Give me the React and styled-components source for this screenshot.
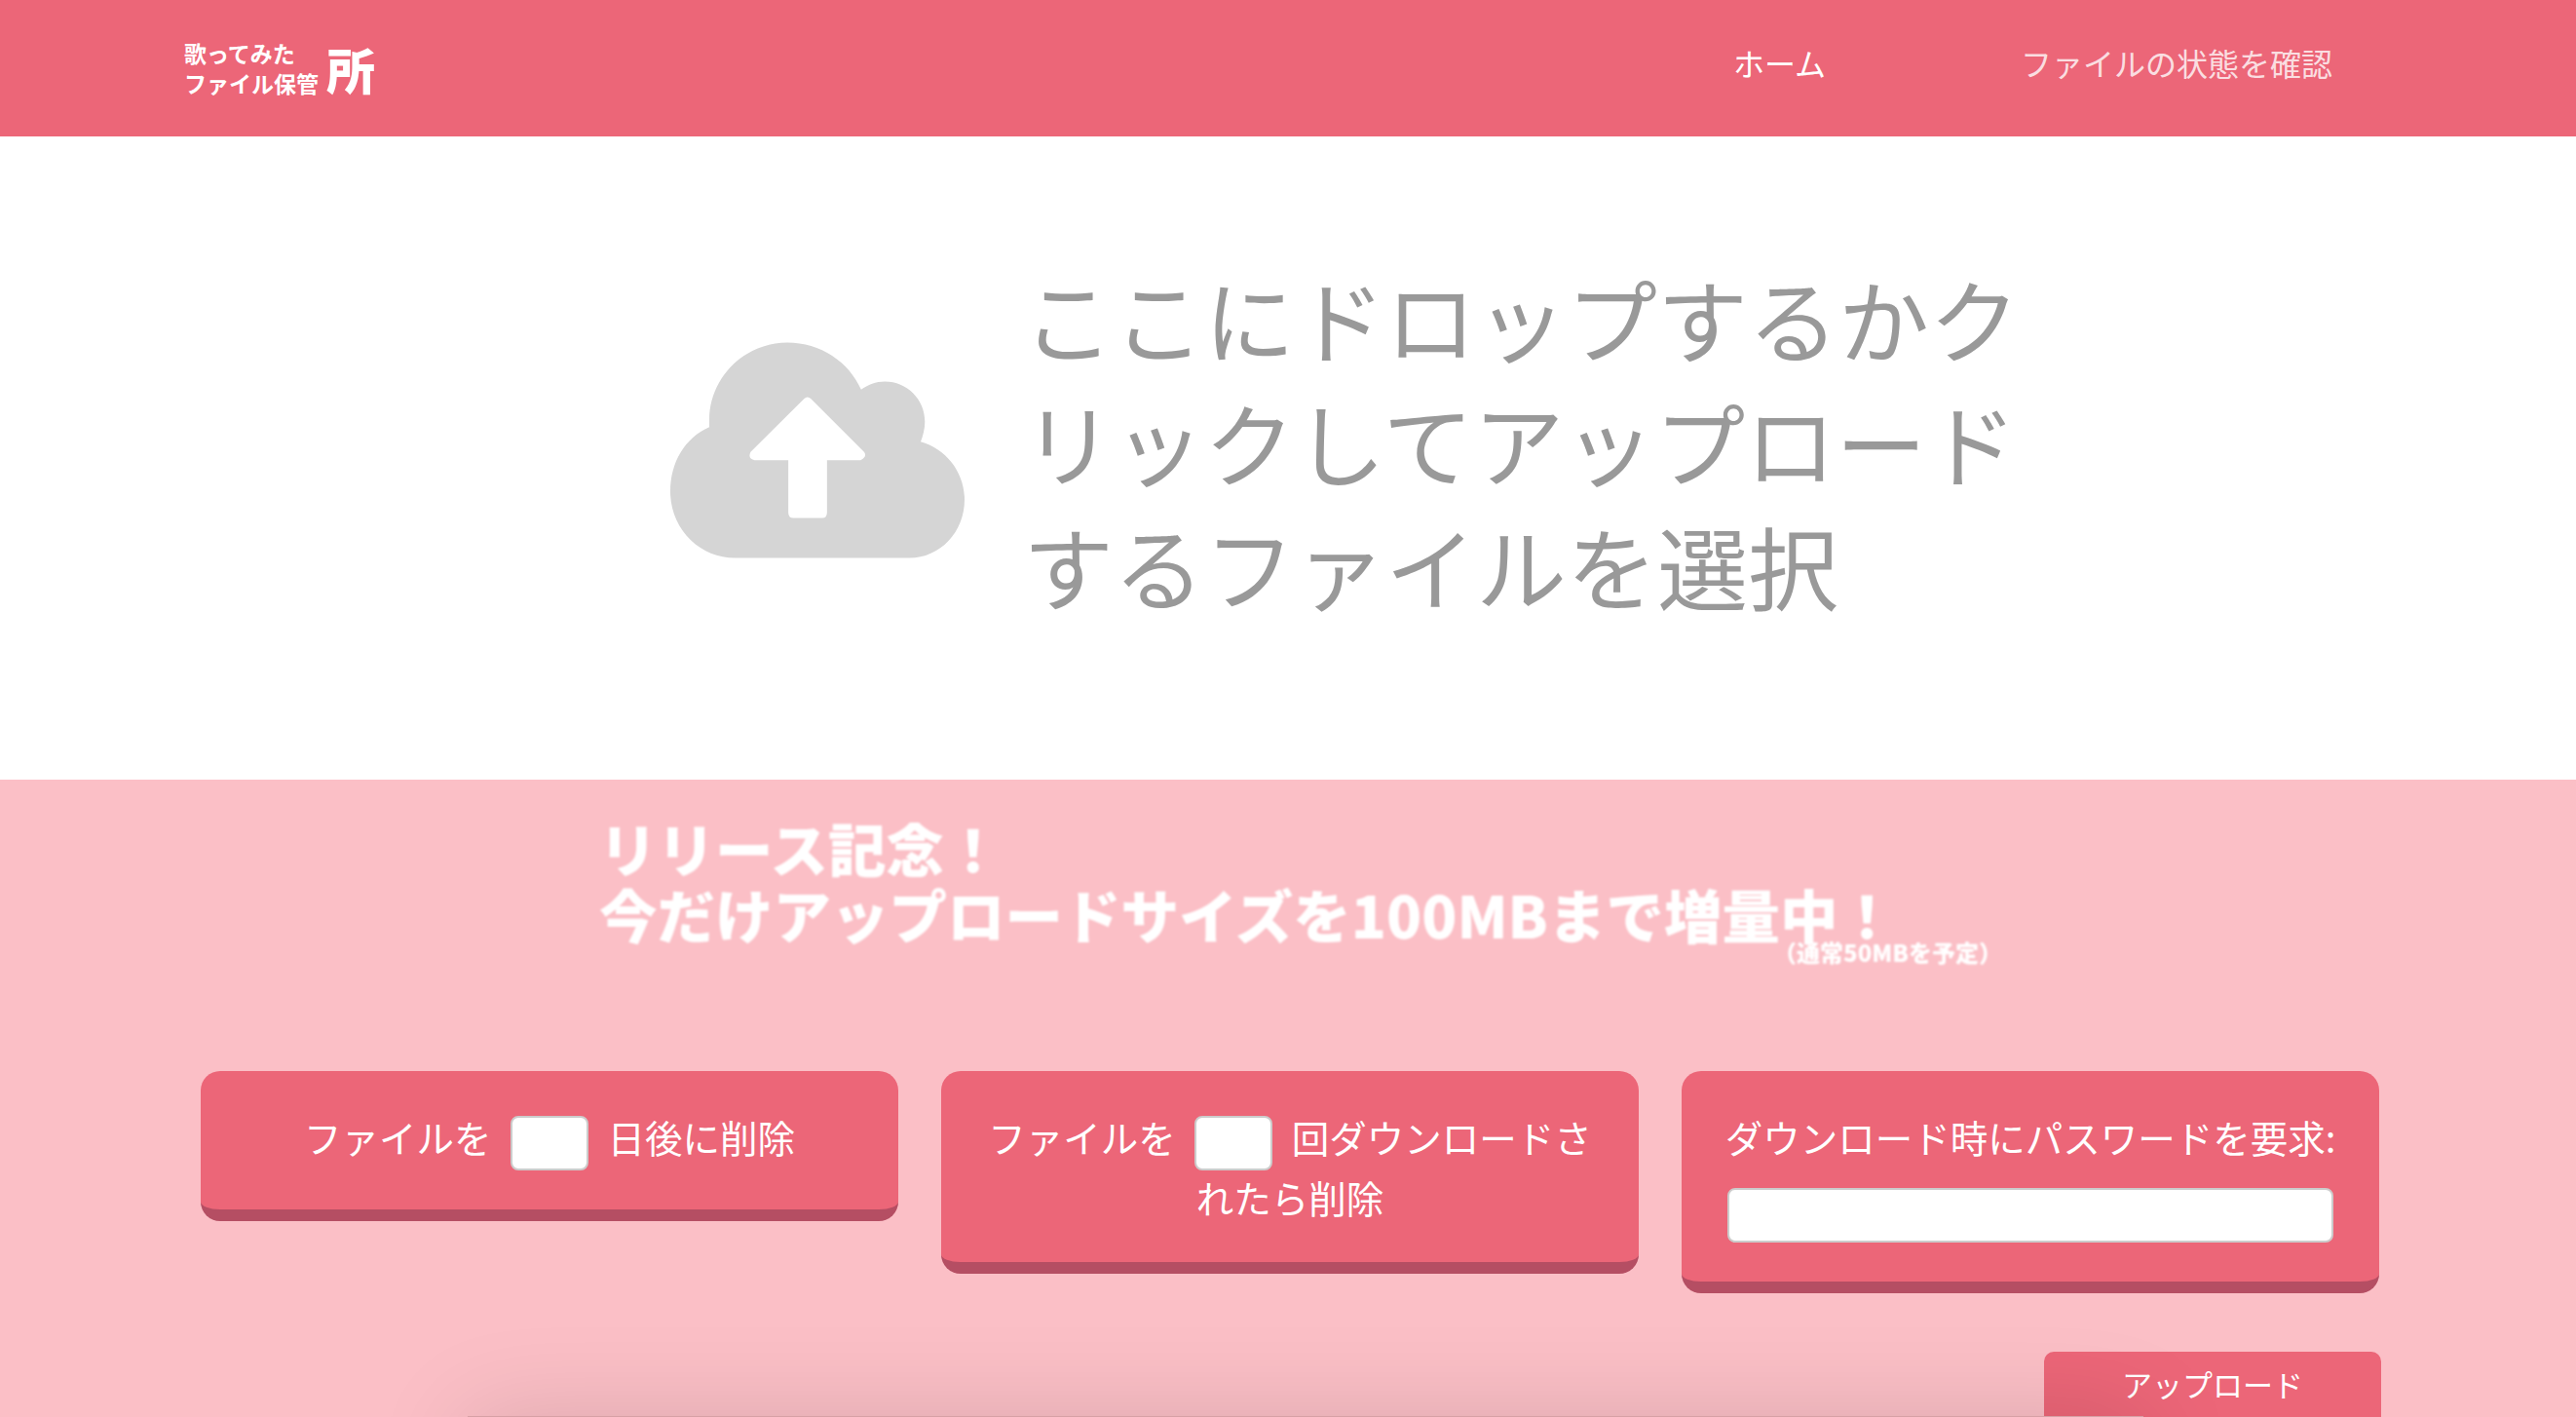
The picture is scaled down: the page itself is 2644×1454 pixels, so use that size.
import React from 'react'
import styled, { createGlobalStyle } from 'styled-components'

const GlobalStyle = createGlobalStyle`
  html, body {
    margin: 0;
    height: 100%;
    overflow: hidden;
    background: rgb(251, 191, 198);
  }
  * {
    box-sizing: border-box;
  }
`

const Page = styled.div`
  position: relative;
  height: 1454px;
  overflow: hidden;
  font-family: 'Noto Sans CJK JP', 'Noto Sans', sans-serif;
  color: white;
`

const Header = styled.header`
  display: flex;
  align-items: center;
  justify-content: space-between;
  height: 140px;
  padding: 0 250px 12px 189px;
  background: rgb(236, 102, 120);
`

const Logo = styled.div`
  display: flex;
  align-items: center;
  gap: 8px;
  margin-top: 12px;
  font-weight: 700;
`

const LogoText = styled.div`
  font-size: 23px;
  line-height: 31px;
`

const LogoMark = styled.div`
  font-size: 50px;
  line-height: 56px;
  font-weight: 900;
`

const Nav = styled.nav`
  display: flex;
  gap: 200px;
  font-size: 32px;
  font-weight: 400;
`

const NavLink = styled.a`
  color: ${props => (props.$muted ? 'rgba(255, 255, 255, 0.8)' : 'white')};
  text-decoration: none;
`

const Hero = styled.section`
  display: flex;
  align-items: center;
  gap: 60px;
  height: 660px;
  padding: 0 0 16px 688px;
  background: white;
`

const HeroText = styled.div`
  width: 1040px;
  margin-bottom: 20px;
  font-size: 93px;
  line-height: 127px;
  font-weight: 400;
  color: #999;
`

const Promo = styled.div`
  width: 1440px;
  margin-left: 615px;
  padding-top: 35px;
  font-size: 59.5px;
  line-height: 68px;
  font-weight: 900;
  filter: blur(0.8px);
`

const PromoNote = styled.div`
  margin-top: -9px;
  font-size: 24px;
  line-height: 30px;
  text-align: right;
`

const Cards = styled.div`
  display: flex;
  align-items: flex-start;
  gap: 44px;
  margin: 107px 0 0 206px;
`

const Card = styled.div`
  width: 716px;
  padding: 40px 38px;
  border-bottom: 12px solid rgb(181, 78, 99);
  border-radius: 20px;
  background: rgb(236, 102, 120);
  font-size: 38.5px;
  line-height: 54px;
  font-weight: 400;
  text-align: center;
`

const SmallInput = styled.input`
  width: 80px;
  height: 56px;
  margin: 0 11px;
  border: 2px solid #ccc;
  border-radius: 8px;
  background: white;
  vertical-align: middle;
`

const WideInput = styled.input`
  display: block;
  width: 622px;
  height: 56px;
  margin: 26px auto 0;
  border: 2px solid #ccc;
  border-radius: 8px;
  background: white;
`

const UploadRow = styled.div`
  display: flex;
  justify-content: flex-end;
  padding-right: 200px;
  margin-top: 60px;
`

const UploadButton = styled.button`
  width: 346px;
  height: 100px;
  padding: 0 0 36px;
  border: 0;
  border-radius: 10px 10px 0 0;
  background: rgb(236, 102, 120);
  color: white;
  font-family: inherit;
  font-size: 31px;
  font-weight: 400;
`

// panel that starts on the last pixel row, only its shadow is really seen
const FoldPanel = styled.div`
  position: absolute;
  left: 480px;
  right: 444px;
  top: 1453px;
  height: 200px;
  background: rgb(215, 160, 165);
  box-shadow: 0 0 100px rgba(0, 0, 0, 0.13);
`

function CloudIcon() {
  return (
    <svg width="302" height="222" viewBox="145 152 905 663">
      <path
        fill="#d5d5d5"
        d="M265 412C190 445 145 520 145 610C145 725 235 815 345 815L880 815C975 815 1050 735 1050 635C1050 550 992 478 915 457C922 440 928 418 928 395C928 327 873 272 805 272C778 272 752 282 732 297C695 212 607 152 505 152C373 152 265 260 265 390Z"
      />
      <path
        fill="white"
        d="M557 325Q567 316 577 325L741 489Q752 502 730 514L627 514L627 675Q627 692 612 692L524 692Q508 692 508 675L508 514L405 514Q382 510 392 489Z"
      />
    </svg>
  )
}

export default function App() {
  return (
    <Page>
      <GlobalStyle />
      <Header>
        <Logo>
          <LogoText>
            歌ってみた
            <br />
            ファイル保管
          </LogoText>
          <LogoMark>所</LogoMark>
        </Logo>
        <Nav>
          <NavLink href="#">ホーム</NavLink>
          <NavLink href="#" $muted>
            ファイルの状態を確認
          </NavLink>
        </Nav>
      </Header>
      <Hero>
        <CloudIcon />
        <HeroText>ここにドロップするかクリックしてアップロードするファイルを選択</HeroText>
      </Hero>
      <Promo>
        リリース記念！
        <br />
        今だけアップロードサイズを100MBまで増量中！
        <PromoNote>（通常50MBを予定）</PromoNote>
      </Promo>
      <Cards>
        <Card>
          ファイルを <SmallInput type="text" /> 日後に削除
        </Card>
        <Card>
          ファイルを <SmallInput type="text" /> 回ダウンロードされたら削除
        </Card>
        <Card>
          ダウンロード時にパスワードを要求:
          <WideInput type="password" />
        </Card>
      </Cards>
      <UploadRow>
        <UploadButton>アップロード</UploadButton>
      </UploadRow>
      <FoldPanel />
    </Page>
  )
}
